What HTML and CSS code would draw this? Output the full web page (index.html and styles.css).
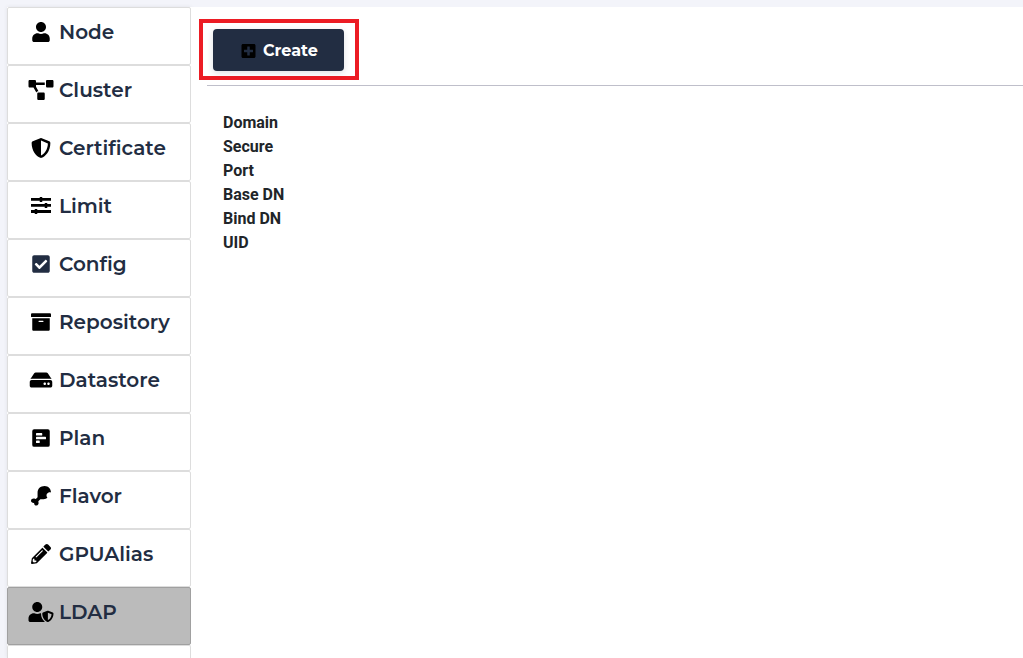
FILE: index.html
```html
<!DOCTYPE html>
<html lang="en">
<head>
<meta charset="utf-8">
<title>LDAP</title>
<link rel="stylesheet" href="styles.css">
</head>
<body>
<div class="layout">
  <nav class="menu" aria-label="Settings">
    <a class="menu-item" href="#node"><svg class="icon" viewBox="0 0 640 512" aria-hidden="true"><path transform="translate(96)" d="M224 256c70.7 0 128-57.3 128-128S294.7 0 224 0 96 57.3 96 128s57.3 128 128 128zm89.6 32h-16.7c-22.2 10.2-46.9 16-72.9 16s-50.6-5.8-72.9-16h-16.7C60.2 288 0 348.2 0 422.4V464c0 26.5 21.5 48 48 48h352c26.5 0 48-21.5 48-48v-41.6c0-74.2-60.2-134.4-134.4-134.4z"/></svg>Node</a>
    <a class="menu-item" href="#cluster"><svg class="icon" viewBox="0 0 640 512" aria-hidden="true"><path d="M384 320H256c-17.67 0-32 14.33-32 32v128c0 17.67 14.33 32 32 32h128c17.67 0 32-14.33 32-32V352c0-17.67-14.33-32-32-32zM192 32c0-17.67-14.33-32-32-32H32C14.33 0 0 14.33 0 32v128c0 17.67 14.33 32 32 32h95.72l73.16 128.04C211.98 300.98 232.4 288 256 288h.28L192 175.51V128h224V64H192V32zM608 0H480c-17.67 0-32 14.33-32 32v128c0 17.67 14.33 32 32 32h128c17.67 0 32-14.33 32-32V32c0-17.67-14.33-32-32-32z"/></svg>Cluster</a>
    <a class="menu-item" href="#certificate"><svg class="icon" viewBox="0 0 640 512" aria-hidden="true"><path transform="translate(64)" d="M466.5 83.7l-192-80a48.15 48.15 0 0 0-36.9 0l-192 80C27.7 91.1 16 108.6 16 128c0 198.5 114.5 335.7 221.5 380.3 11.8 4.9 25.1 4.9 36.9 0C360.1 472.6 496 349.3 496 128c0-19.4-11.7-36.9-29.5-44.3zM256.1 446.3l-.1-381 175.9 73.3c-3.3 151.4-82.1 261.1-175.8 307.7z"/></svg>Certificate</a>
    <a class="menu-item" href="#limit"><svg class="icon" viewBox="0 0 640 512" aria-hidden="true"><path d="M64 52H576V124H64zM64 206H576V278H64zM64 360H576V432H64zM288 24h64v128h-64zM416 178h64v128h-64zM160 332h64v128h-64z"/></svg>Limit</a>
    <a class="menu-item" href="#config"><svg class="icon icon-navy" viewBox="0 0 640 512" aria-hidden="true"><path transform="translate(96)" d="M400 480H48c-26.51 0-48-21.49-48-48V80c0-26.51 21.49-48 48-48h352c26.51 0 48 21.49 48 48v352c0 26.51-21.49 48-48 48zm-204.686-98.059l184-184c6.248-6.248 6.248-16.379 0-22.627l-22.627-22.627c-6.248-6.248-16.379-6.249-22.628 0L184 302.745l-70.059-70.059c-6.248-6.248-16.379-6.248-22.628 0l-22.627 22.627c-6.248 6.248-6.248 16.379 0 22.627l104 104c6.249 6.25 16.379 6.25 22.628.001z"/></svg>Config</a>
    <a class="menu-item" href="#repository"><svg class="icon" viewBox="0 0 640 512" aria-hidden="true"><path transform="translate(64)" d="M32 448c0 17.7 14.3 32 32 32h384c17.7 0 32-14.3 32-32V160H32v288zm160-212c0-6.6 5.4-12 12-12h104c6.6 0 12 5.4 12 12v8c0 6.6-5.4 12-12 12H204c-6.6 0-12-5.4-12-12v-8zM480 32H32C14.3 32 0 46.3 0 64v48c0 8.8 7.2 16 16 16h480c8.8 0 16-7.2 16-16V64c0-17.7-14.3-32-32-32z"/></svg>Repository</a>
    <a class="menu-item" href="#datastore"><svg class="icon" viewBox="0 0 640 512" aria-hidden="true"><path transform="translate(32)" d="M576 304v96c0 26.51-21.49 48-48 48H48c-26.51 0-48-21.49-48-48v-96c0-26.51 21.49-48 48-48h480c26.51 0 48 21.49 48 48zm-48-80a79.557 79.557 0 0 1 30.777 6.165L462.25 85.374A48.003 48.003 0 0 0 422.311 64H153.689a48 48 0 0 0-39.938 21.374L17.223 230.165A79.557 79.557 0 0 1 48 224h480zm-48 96c-17.673 0-32 14.327-32 32s14.327 32 32 32 32-14.327 32-32-14.327-32-32-32zm-96 0c-17.673 0-32 14.327-32 32s14.327 32 32 32 32-14.327 32-32-14.327-32-32-32z"/></svg>Datastore</a>
    <a class="menu-item" href="#plan"><svg class="icon" viewBox="0 0 640 512" aria-hidden="true"><path fill-rule="evenodd" transform="translate(96)" d="M48 32H400a48 48 0 0 1 48 48V432a48 48 0 0 1-48 48H48a48 48 0 0 1-48-48V80a48 48 0 0 1 48-48zM112 128a16 16 0 0 0-16 16v32a16 16 0 0 0 16 16h128a16 16 0 0 0 16-16v-32a16 16 0 0 0-16-16zM112 224a16 16 0 0 0-16 16v32a16 16 0 0 0 16 16h224a16 16 0 0 0 16-16v-32a16 16 0 0 0-16-16zM112 320a16 16 0 0 0-16 16v32a16 16 0 0 0 16 16h64a16 16 0 0 0 16-16v-32a16 16 0 0 0-16-16z"/></svg>Plan</a>
    <a class="menu-item" href="#flavor"><svg class="icon" viewBox="0 0 640 512" aria-hidden="true"><path transform="translate(64)" d="M512 168c-20-8-42-7-62 1-42 18-63 57-48 98 4 12 11 22 19 31-24 18-58 34-98 40H240l-46 46c-7 7-8 18-4 28 16 38-6 90-54 90-32 0-56-26-56-56 0-4 0-8 1-12-4 1-8 1-12 1-38 0-69-22-69-56 0-48 61-69 102-51 10 4 21 3 28-4l38-38v-120C168 72 242 0 350 0c94 0 162 72 162 168z"/></svg>Flavor</a>
    <a class="menu-item" href="#gpualias"><svg class="icon" viewBox="0 0 640 512" aria-hidden="true"><path transform="translate(64)" d="M497.9 142.1l-46.1 46.1c-4.7 4.7-12.3 4.7-17 0l-111-111c-4.7-4.7-4.7-12.3 0-17l46.1-46.1c18.7-18.7 49.1-18.7 67.9 0l60.1 60.1c18.8 18.7 18.8 49.1 0 67.9zM284.2 99.8L21.6 362.4.4 483.9c-2.9 16.4 11.4 30.6 27.8 27.8l121.5-21.3 262.6-262.6c4.7-4.7 4.7-12.3 0-17l-111-111c-4.8-4.7-12.4-4.7-17.1 0zM124.1 339.9c-5.5-5.5-5.5-14.3 0-19.8l154-154c5.5-5.5 14.3-5.5 19.8 0s5.5 14.3 0 19.8l-154 154c-5.5 5.5-14.3 5.5-19.8 0zM88 424h48v36.3l-64.5 11.3-31.1-31.1L51.7 376H88v48z"/></svg>GPUAlias</a>
    <a class="menu-item menu-item-active" href="#ldap" aria-current="page"><svg class="icon" viewBox="0 0 640 512" aria-hidden="true"><path d="M622.3 271.1l-115.2-45c-4.1-1.6-12.6-3.7-22.2 0l-115.2 45c-10.7 4.2-17.7 14-17.7 24.9 0 111.6 68.7 188.8 132.9 213.9 9.6 3.7 18 1.6 22.2 0C558.4 489.9 640 420.5 640 296c0-10.9-7-20.7-17.7-24.9zM496 462.4V273.3l95.5 37.3c-5.6 87.1-60.9 135.4-95.5 151.8zM224 256c70.7 0 128-57.3 128-128S294.7 0 224 0 96 57.3 96 128s57.3 128 128 128zm96 40c0-2.5.8-4.8 1.1-7.2-2.5-.1-4.9-.8-7.5-.8h-16.7c-22.2 10.2-46.9 16-72.9 16s-50.6-5.8-72.9-16h-16.7C60.2 288 0 348.2 0 422.4V464c0 26.5 21.5 48 48 48h352c6.8 0 13.3-1.5 19.2-4-54-42.9-99.2-116.7-99.2-212z"/></svg>LDAP</a>
    <div class="menu-rest"></div>
  </nav>
  <main class="content">
    <div class="highlight">
      <button class="create" type="button"><svg class="create-icon" viewBox="0 0 448 512" aria-hidden="true"><path d="M400 32H48C21.5 32 0 53.5 0 80v352c0 26.5 21.5 48 48 48h352c26.5 0 48-21.5 48-48V80c0-26.5-21.5-48-48-48zm-32 252c0 6.6-5.4 12-12 12h-92v92c0 6.6-5.4 12-12 12h-56c-6.6 0-12-5.4-12-12v-92H92c-6.6 0-12-5.4-12-12v-56c0-6.6 5.4-12 12-12h92v-92c0-6.6 5.4-12 12-12h56c6.6 0 12 5.4 12 12v92h92c6.6 0 12 5.4 12 12v56z"/></svg>Create</button>
    </div>
    <dl class="details">
      <dt>Domain</dt>
      <dt>Secure</dt>
      <dt>Port</dt>
      <dt>Base DN</dt>
      <dt>Bind DN</dt>
      <dt>UID</dt>
    </dl>
  </main>
</div>
</body>
</html>
```

FILE: styles.css
```css
* {
  box-sizing: border-box;
}

body {
  margin: 0;
  background: #f3f4fa;
  color: #212529;
  font-family: Roboto, sans-serif;
}

.layout {
  display: flex;
  min-height: 100vh;
  padding: 7px 0 0 7px;
}

.menu {
  display: flex;
  flex-direction: column;
  flex: none;
  width: 184px;
  background: #fff;
  box-shadow: 0 0 4px rgba(0, 0, 0, 0.08);
}

.menu-item {
  display: flex;
  align-items: center;
  gap: 5px;
  padding: 10px 20px 18px;
  border: 1px solid #ddd;
  border-radius: 2px;
  background: #fff;
  color: #222d42;
  font-family: Montserrat, Inter, sans-serif;
  font-size: 20px;
  font-variant-ligatures: none;
  font-weight: 600;
  line-height: 28px;
  text-decoration: none;
}

.menu-item-active {
  border-color: #a0a0a0;
  background: #bbb;
}

.menu-rest {
  flex: 1;
  border: 1px solid #ddd;
  border-bottom: 0;
  border-radius: 2px 2px 0 0;
}

.icon {
  flex: none;
  width: 26px;
  height: 20px;
  fill: #000;
}

.icon-navy {
  fill: #222d42;
}

.content {
  flex: 1;
  padding: 12px 0 0 8px;
  background: #fff;
}

.highlight {
  width: fit-content;
  padding: 6px 11px 5px 10px;
  border: 4px solid #ec1c24;
}

.create {
  display: flex;
  align-items: center;
  gap: 7px;
  padding: 10px 26px 8px 28px;
  border: 0;
  border-radius: 4px;
  background: #222d42;
  box-shadow: 0 2px 6px rgba(34, 45, 66, 0.15);
  color: #fff;
  font-family: Montserrat, Inter, sans-serif;
  font-size: 16px;
  font-weight: 700;
  line-height: 24px;
}

.create-icon {
  width: 15px;
  height: 16px;
  fill: #000;
}

.details {
  margin: 5px 0 0 8px;
  padding: 25px 16px;
  border-top: 1px solid #bfbfca;
  font-size: 16px;
  font-weight: 700;
  line-height: 24px;
}
```
